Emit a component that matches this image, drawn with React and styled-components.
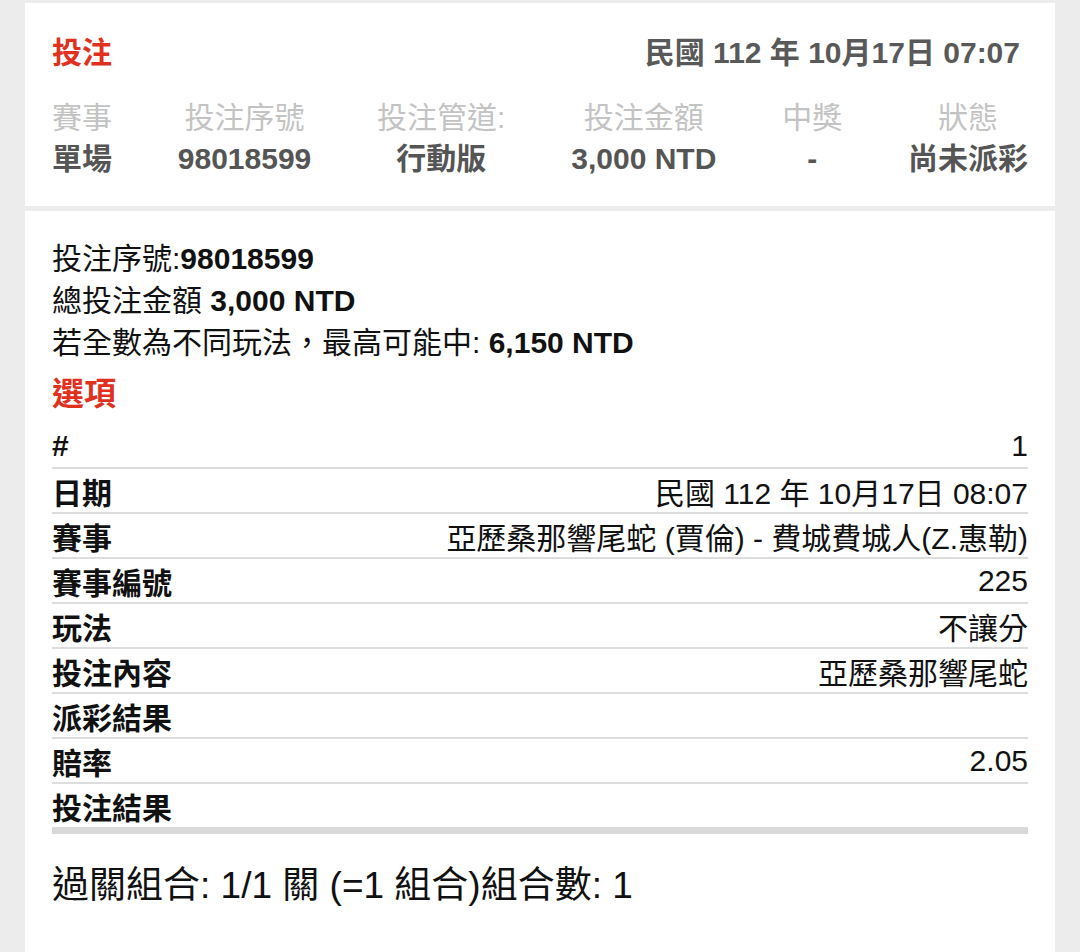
import React from "react";
import styled, { createGlobalStyle } from "styled-components";

const GlobalStyle = createGlobalStyle`
  html, body {
    margin: 0;
    padding: 0;
    background: #ececec;
    font-family: "Liberation Sans", "Noto Sans CJK TC", sans-serif;
  }
`;

const summary = [
  { label: "賽事", value: "單場" },
  { label: "投注序號", value: "98018599" },
  { label: "投注管道:", value: "行動版" },
  { label: "投注金額", value: "3,000 NTD" },
  { label: "中獎", value: "-" },
  { label: "狀態", value: "尚未派彩" },
];

const details = [
  { label: "#", value: "1" },
  { label: "日期", value: "民國 112 年 10月17日 08:07" },
  { label: "賽事", value: "亞歷桑那響尾蛇 (賈倫) - 費城費城人(Z.惠勒)" },
  { label: "賽事編號", value: "225" },
  { label: "玩法", value: "不讓分" },
  { label: "投注內容", value: "亞歷桑那響尾蛇" },
  { label: "派彩結果", value: "" },
  { label: "賠率", value: "2.05" },
  { label: "投注結果", value: "" },
];

const App = () => {
  return (
    <>
      <GlobalStyle />
      <Page>
        <Card>
          <TitleRow>
            <RedTitle>投注</RedTitle>
            <DateText>民國 112 年 10月17日 07:07</DateText>
          </TitleRow>
          <SummaryRow>
            {summary.map((item) => (
              <SummaryCol key={item.label}>
                <SummaryLabel>{item.label}</SummaryLabel>
                <SummaryValue>{item.value}</SummaryValue>
              </SummaryCol>
            ))}
          </SummaryRow>
        </Card>
        <DetailCard>
          <InfoLine>
            投注序號:<b>98018599</b>
          </InfoLine>
          <InfoLine>
            總投注金額 <b>3,000 NTD</b>
          </InfoLine>
          <InfoLine>
            若全數為不同玩法，最高可能中: <b>6,150 NTD</b>
          </InfoLine>
          <SectionTitle>選項</SectionTitle>
          <Table>
            {details.map((row, index) => (
              <TableRow key={row.label} $last={index === details.length - 1}>
                <RowLabel>{row.label}</RowLabel>
                <RowValue>{row.value}</RowValue>
              </TableRow>
            ))}
          </Table>
          <Combo>過關組合: 1/1 關 (=1 組合)組合數: 1</Combo>
        </DetailCard>
      </Page>
    </>
  );
};

export default App;

const Page = styled.div`
  display: flex;
  flex-direction: column;
  gap: 5px;
  padding: 3px 25px 0;
  min-height: 952px;
  box-sizing: border-box;
`;

const Card = styled.div`
  background: #ffffff;
  padding: 27px 27px 26px;
`;

const DetailCard = styled(Card)`
  flex: 1;
  padding-top: 27px;
`;

const TitleRow = styled.div`
  display: flex;
  justify-content: space-between;
  align-items: center;
  height: 40px;
  margin-bottom: 28px;
`;

const RedTitle = styled.div`
  color: #e0311f;
  font-size: 30px;
  font-weight: 700;
`;

const DateText = styled.div`
  color: #595959;
  font-size: 30px;
  font-weight: 700;
  margin-right: 8px;
`;

const SummaryRow = styled.div`
  display: flex;
  justify-content: space-between;
`;

const SummaryCol = styled.div`
  display: flex;
  flex-direction: column;
  align-items: center;
`;

const SummaryLabel = styled.div`
  color: #c3c3c3;
  font-size: 30px;
  line-height: 40px;
`;

const SummaryValue = styled.div`
  color: #555555;
  font-size: 30px;
  font-weight: 700;
  line-height: 42px;
`;

const InfoLine = styled.div`
  color: #111111;
  font-size: 30px;
  line-height: 42px;
  b {
    font-weight: 700;
  }
`;

const SectionTitle = styled.div`
  color: #e0311f;
  font-size: 32px;
  font-weight: 700;
  line-height: 50px;
  margin-top: 5px;
`;

const Table = styled.div`
  display: flex;
  flex-direction: column;
  margin-top: 5px;
`;

const TableRow = styled.div`
  display: flex;
  justify-content: space-between;
  align-items: center;
  height: 43px;
  border-bottom: ${(p) => (p.$last ? "7px solid #d9d9d9" : "2px solid #dddddd")};
`;

const RowLabel = styled.div`
  color: #111111;
  font-size: 30px;
  font-weight: 700;
  white-space: nowrap;
`;

const RowValue = styled.div`
  color: #111111;
  font-size: 30px;
  white-space: nowrap;
`;

const Combo = styled.div`
  color: #111111;
  font-size: 37px;
  line-height: 50px;
  margin-top: 27px;
`;
